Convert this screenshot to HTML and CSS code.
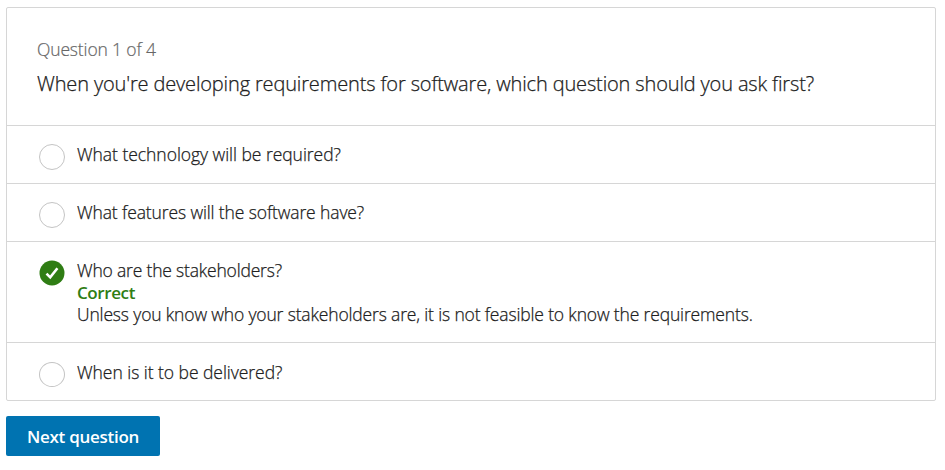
FILE: index.html
```html
<!DOCTYPE html>
<html lang="en">
<head>
<meta charset="utf-8">
<title>Quiz</title>
<link rel="stylesheet" href="styles.css">
</head>
<body>
<main class="quiz">
  <section class="card">
    <header class="head">
      <p class="count">Question 1 of 4</p>
      <h1 class="title">When you're developing requirements for software, which question should you ask first?</h1>
    </header>
    <div class="option"><span class="radio"></span><div class="answer"><p class="loose">What technology will be required?</p></div></div>
    <div class="option"><span class="radio"></span><div class="answer"><p>What features will the software have?</p></div></div>
    <div class="option">
      <svg class="check" viewBox="0 0 26 26" aria-hidden="true"><circle cx="13" cy="13" r="12.5"/><path d="M7.5 13.6 11.2 17.3 18.4 8.2"/></svg>
      <div class="answer">
        <p class="tight">Who are the stakeholders?</p>
        <p class="correct">Correct</p>
        <p class="reason">Unless you know who your stakeholders are, it is not feasible to know the requirements.</p>
      </div>
    </div>
    <div class="option last"><span class="radio"></span><div class="answer"><p class="loose">When is it to be delivered?</p></div></div>
  </section>
  <button class="next" type="button">Next question</button>
</main>
</body>
</html>
```
FILE: styles.css
```css
* { box-sizing: border-box; }
body { margin: 0; background: #fff; color: #202020; font-family: "Open Sans", sans-serif; }
p, h1 { margin: 0; white-space: nowrap; }
.quiz { padding: 7px 9px 0 6px; }
.card { border: 1px solid #d6d6d6; border-radius: 2px; }
.head { height: 117px; padding: 30px 30px 0; }
.count { font-size: 17.5px; line-height: 22px; font-weight: 300; color: #666; letter-spacing: -0.15px; -webkit-text-stroke: 0.2px; }
.title { margin-top: 10px; font-size: 20px; line-height: 28px; font-weight: 300; letter-spacing: -0.145px; -webkit-text-stroke: 0.25px; }
.option { display: flex; gap: 12px; min-height: 58px; padding: 18px 32px 16px; border-top: 1px solid #d6d6d6; }
.last { padding-top: 19px; padding-bottom: 15px; }
.radio, .check { flex: none; width: 26px; height: 26px; margin-bottom: -4px; }
.radio { border: 1px solid #c4c4c4; border-radius: 50%; }
.last .radio { height: 25px; }
.check circle { fill: #2f7d14; }
.check path { fill: none; stroke: #fff; stroke-width: 2.6; }
.answer { margin: -1px 0 1px; font-size: 17.5px; line-height: 22px; font-weight: 300; letter-spacing: -0.12px; -webkit-text-stroke: 0.25px; }
.loose { letter-spacing: -0.04px; }
.tight { letter-spacing: -0.19px; }
.reason { letter-spacing: -0.155px; }
.correct { padding-top: 2px; line-height: 20px; color: #2f7d14; font-size: 17px; font-weight: 600; letter-spacing: -0.4px; -webkit-text-stroke: 0; }
.next { display: block; width: 154px; height: 40px; margin-top: 15px; padding: 1px 0 0; border: 0; border-radius: 2px; background: #0073b1; color: #fff; font: 600 17px/39px "Open Sans", sans-serif; letter-spacing: -0.28px; }
```
